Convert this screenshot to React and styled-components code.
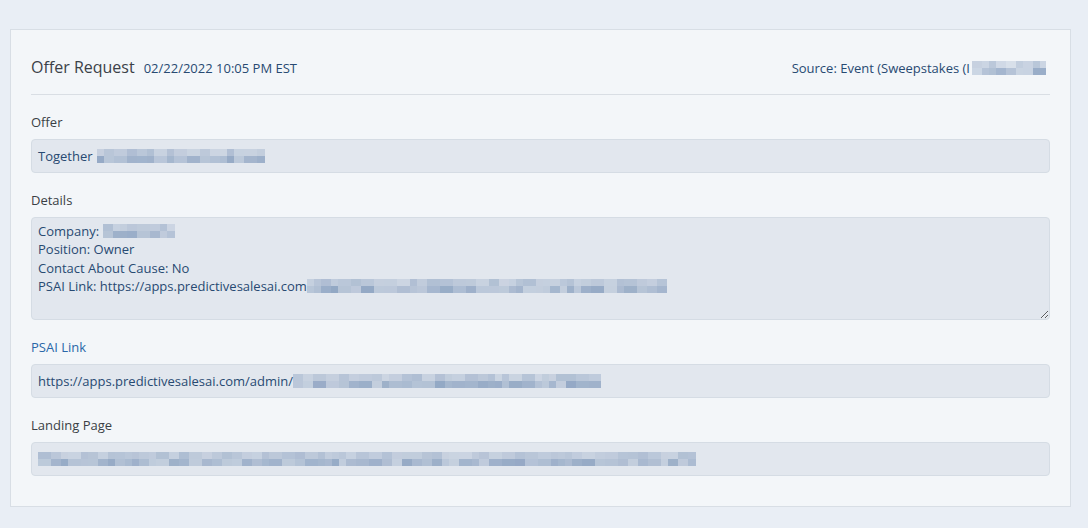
import React from "react";
import styled, { createGlobalStyle } from "styled-components";

const Global = createGlobalStyle`
  html, body { margin: 0; padding: 0; background: #e9eef5; }
  body { font-family: "Open Sans", "Liberation Sans", sans-serif; }
  * { box-sizing: border-box; }
`;

const Page = styled.div`
  padding: 29px 17px 22px 10px;
  min-height: 528px;
`;

const Card = styled.section`
  background: #f3f6f9;
  border: 1px solid #d8dee5;
  padding: 20px 20px 30px 20px;
  display: flex;
  flex-direction: column;
`;

const Header = styled.header`
  display: flex;
  align-items: baseline;
  padding: 6px 0 16px 0;
  border-bottom: 1px solid #d9dee4;
  margin-bottom: 18px;
`;

const Title = styled.h2`
  margin: 0;
  font-size: 16px;
  line-height: 22px;
  font-weight: 400;
  color: #3b4148;
`;

const Stamp = styled.span`
  margin-left: 9px;
  font-size: 13px;
  color: #284a72;
`;

const Source = styled.span`
  margin-left: auto;
  margin-right: 4px;
  font-size: 13px;
  color: #284a72;
  display: inline-flex;
  align-items: center;
`;

const Field = styled.div`
  display: flex;
  flex-direction: column;
  & + & { margin-top: 18px; }
`;

const Label = styled.label`
  font-size: 13px;
  line-height: 18px;
  color: ${(p) => (p.$link ? "#2a67a8" : "#3a3f45")};
  margin-bottom: 8px;
`;

const Box = styled.div`
  background: #e2e7ee;
  border: 1px solid #d5dce4;
  border-radius: 4px;
  font-size: 13px;
  line-height: 18px;
  color: #284a72;
  padding: 7px 6px;
  height: 34px;
  display: flex;
  align-items: center;
  white-space: nowrap;
  overflow: hidden;
`;

const Area = styled.div`
  background: #e2e7ee;
  border: 1px solid #d5dce4;
  border-radius: 4px;
  font-size: 13px;
  line-height: 18.3px;
  color: #284a72;
  padding: 4px 6px;
  height: 103px;
  resize: vertical;
  overflow: auto;
`;

const Line = styled.div`
  display: flex;
  align-items: center;
  white-space: nowrap;
`;

const Mosaic = styled.span`
  display: inline-flex;
  height: 14px;
  width: ${(p) => p.$w}px;
  margin-left: ${(p) => p.$ml || 0}px;
  filter: blur(0.7px);
  overflow: hidden;
  flex-shrink: 0;
`;

const Tile = styled.span`
  flex: 0 0 auto;
  display: flex;
  flex-direction: column;
  height: 100%;
`;

const Cell = styled.span`
  flex: 1 1 0;
`;

function rand(seed) {
  let s = seed;
  return () => {
    s = (s * 9301 + 49297) % 233280;
    return s / 233280;
  };
}

function Redacted({ w, ml, seed = 1 }) {
  const r = rand(seed);
  const tiles = [];
  let x = 0;
  let i = 0;
  while (x < w) {
    const tw = Math.min(w - x, 7 + Math.floor(r() * 3) * 3);
    const a = 0.3 + r() * 0.45;
    const b = 0.25 + r() * 0.45;
    tiles.push(
      <Tile key={i++} style={{ width: tw }}>
        <Cell style={{ background: `rgba(128,152,186,${a * 0.7})` }} />
        <Cell style={{ background: `rgba(112,140,178,${b})` }} />
      </Tile>
    );
    x += tw;
  }
  return (
    <Mosaic $w={w} $ml={ml}>
      {tiles}
    </Mosaic>
  );
}

export default function App() {
  return (
    <>
      <Global />
      <Page>
        <Card>
          <Header>
            <Title>Offer Request</Title>
            <Stamp>02/22/2022 10:05 PM EST</Stamp>
            <Source>
              Source: Event (Sweepstakes (I
              <Redacted w={74} ml={2} seed={7} />
            </Source>
          </Header>

          <Field>
            <Label>Offer</Label>
            <Box>
              Together
              <Redacted w={168} ml={4} seed={3} />
            </Box>
          </Field>

          <Field>
            <Label>Details</Label>
            <Area>
              <Line>
                Company:
                <Redacted w={72} ml={4} seed={11} />
              </Line>
              <Line>Position: Owner</Line>
              <Line>Contact About Cause: No</Line>
              <Line>
                PSAI Link: https://apps.predictivesalesai.com
                <Redacted w={360} seed={21} />
              </Line>
            </Area>
          </Field>

          <Field>
            <Label $link>PSAI Link</Label>
            <Box>
              https://apps.predictivesalesai.com/admin/
              <Redacted w={308} seed={31} />
            </Box>
          </Field>

          <Field>
            <Label>Landing Page</Label>
            <Box>
              <Redacted w={658} seed={41} />
            </Box>
          </Field>
        </Card>
      </Page>
    </>
  );
}
